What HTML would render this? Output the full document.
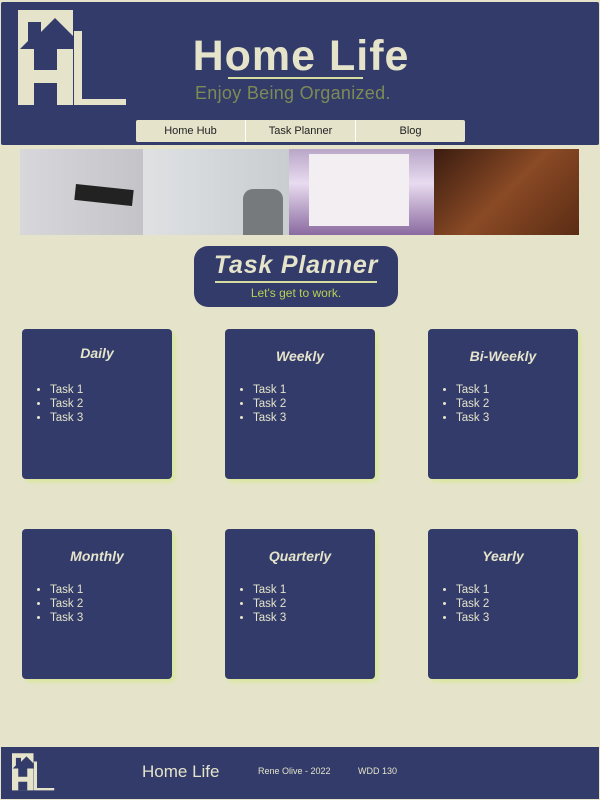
<!DOCTYPE html>
<html><head><style>
*{margin:0;padding:0;box-sizing:border-box}
body{width:600px;height:800px;background:#e5e4cb;font-family:"Liberation Sans",sans-serif;position:relative;overflow:hidden}
.hdr{position:absolute;left:1px;top:2px;width:598px;height:143px;background:#323b69;border-radius:2px}
.title{position:absolute;left:0;width:600px;top:30px;text-align:center;color:#e5e4cb;font-weight:bold;font-size:43px;letter-spacing:1px}
.ul{position:absolute;left:227px;top:75px;width:135px;height:2px;background:#d6dba0}
.sub{position:absolute;left:194px;top:81px;color:#7c8b56;font-size:18px;letter-spacing:0.3px}
.nav{position:absolute;left:135px;top:118px;width:329px;height:22px;background:#e5e4cb;border-radius:2px;display:flex}
.nav div{flex:1;text-align:center;font-size:11px;line-height:22px;color:#222;border-right:1px solid #fff}
.nav div:last-child{border:none}
.img{position:absolute;top:149px;height:86px;overflow:hidden}
.tp{position:absolute;left:194px;top:246px;width:204px;height:61px;background:#323b69;border-radius:14px;text-align:center}
.tp h1{color:#e5e4cb;font-style:italic;font-size:25px;margin-top:5px;letter-spacing:0.8px}
.tp .l{width:162px;height:2px;background:#d6dba0;margin:1px auto 0 21px}
.tp p{color:#b8d055;font-size:12px;margin-top:3px}
.card{position:absolute;width:150px;height:150px;background:#323b69;border-radius:4px;box-shadow:3px 3px 5px #d8e89a;color:#e5e4cb}
.card h2{font-size:14px;font-style:italic;text-align:center;margin-top:16px}
.card ul{margin:22px 0 0 28px;font-size:11.5px;line-height:14px}
.ftr{position:absolute;left:1px;top:747px;width:598px;height:52px;background:#323b69;color:#e5e4cb}
</style></head><body>
<div class="hdr">
<svg style="position:absolute;left:0;top:-2px" width="140" height="115" viewBox="0 0 140 115">
<path fill="#e5e4cb" d="M17 10H72V105H17Z M73 31H81V99H125V105H73Z"/>
<path fill="#323b69" d="M19 49L27 41V22H40V32L54 18L72 36V49H56V70H33V49Z M33 83H56V105H33Z"/>
</svg>
<div class="title">Home Life</div>
<div class="ul"></div>
<div class="sub">Enjoy Being Organized.</div>
<div class="nav"><div>Home Hub</div><div>Task Planner</div><div>Blog</div></div>
</div>
<div class="img" style="left:20px;width:123px;background:linear-gradient(90deg,#d8d8dc,#c4c4c8)"><div style="position:absolute;left:55px;top:38px;width:58px;height:16px;background:#222;transform:rotate(6deg)"></div></div>
<div class="img" style="left:143px;width:146px;background:linear-gradient(90deg,#dfe1e3,#c9cdd0)"><div style="position:absolute;left:100px;top:40px;width:40px;height:46px;background:#777a7c;border-radius:10px 10px 0 0"></div></div>
<div class="img" style="left:289px;width:145px;background:linear-gradient(#b9a6c8,#e8dbef 40%,#8a6aa0)"><div style="position:absolute;left:20px;top:5px;width:100px;height:72px;background:#f2eef2"></div></div>
<div class="img" style="left:434px;width:145px;background:linear-gradient(135deg,#3a1c10,#8a4a25 50%,#5a2c14)"></div>
<div class="tp"><h1>Task Planner</h1><div class="l"></div><p>Let's get to work.</p></div>
<div class="card" style="left:22px;top:329px"><h2>Daily</h2><ul><li>Task 1</li><li>Task 2</li><li>Task 3</li></ul></div>
<div class="card" style="left:225px;top:329px"><h2 style="margin-top:19px">Weekly</h2><ul style="margin-top:19px"><li>Task 1</li><li>Task 2</li><li>Task 3</li></ul></div>
<div class="card" style="left:428px;top:329px"><h2 style="margin-top:19px">Bi-Weekly</h2><ul style="margin-top:19px"><li>Task 1</li><li>Task 2</li><li>Task 3</li></ul></div>
<div class="card" style="left:22px;top:529px"><h2 style="margin-top:19px">Monthly</h2><ul style="margin-top:19px"><li>Task 1</li><li>Task 2</li><li>Task 3</li></ul></div>
<div class="card" style="left:225px;top:529px"><h2 style="margin-top:19px">Quarterly</h2><ul style="margin-top:19px"><li>Task 1</li><li>Task 2</li><li>Task 3</li></ul></div>
<div class="card" style="left:428px;top:529px"><h2 style="margin-top:19px">Yearly</h2><ul style="margin-top:19px"><li>Task 1</li><li>Task 2</li><li>Task 3</li></ul></div>
<div class="ftr">
<svg style="position:absolute;left:11px;top:5px" width="43" height="40" viewBox="17 10 110 96">
<path fill="#e5e4cb" d="M17 10H72V105H17Z M73 31H81V99H125V105H73Z"/>
<path fill="#323b69" d="M19 49L27 41V22H40V32L54 18L72 36V49H56V70H33V49Z M33 83H56V105H33Z"/>
</svg>
<div style="position:absolute;left:141px;top:15px;font-size:17px">Home Life</div>
<div style="position:absolute;left:257px;top:19px;font-size:9px">Rene Olive - 2022</div>
<div style="position:absolute;left:357px;top:19px;font-size:9px">WDD 130</div>
</div>
</body></html>
